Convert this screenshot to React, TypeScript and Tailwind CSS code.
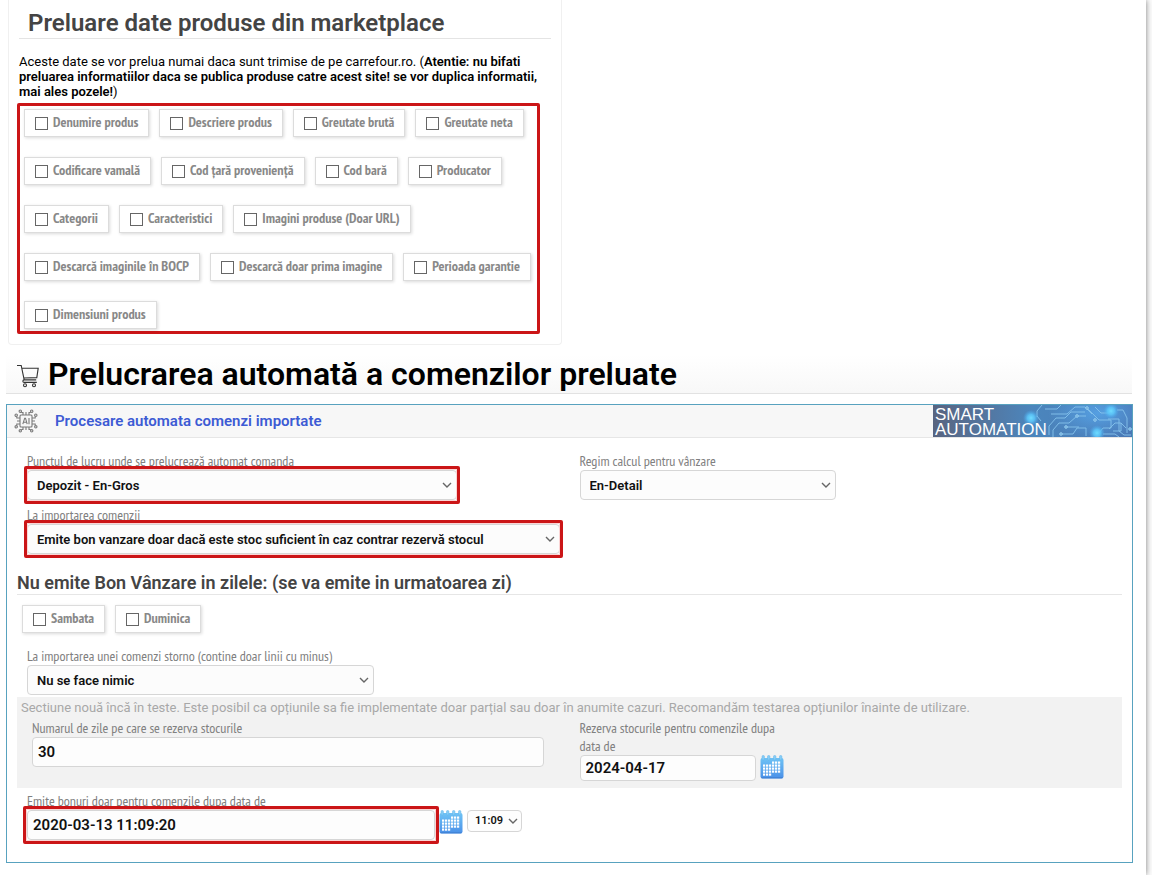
import { useState } from "react";
import type { ReactNode } from "react";

const narrow = "font-['PT_Sans_Narrow','Liberation_Sans_Narrow','Roboto_Condensed',sans-serif]";

const productRows = [
  ["Denumire produs", "Descriere produs", "Greutate brută", "Greutate neta"],
  ["Codificare vamală", "Cod țară proveniență", "Cod bară", "Producator"],
  ["Categorii", "Caracteristici", "Imagini produse (Doar URL)"],
  ["Descarcă imaginile în BOCP", "Descarcă doar prima imagine", "Perioada garantie"],
  ["Dimensiuni produs"],
];

function CheckChip({ label }: { label: string }) {
  return (
    <label
      className={`${narrow} flex h-7 items-center gap-[5px] border border-[#dcdcdc] bg-white px-2.5 text-[14px] leading-4 font-bold whitespace-nowrap text-[#888] shadow-[1px_1px_3px_rgba(0,0,0,0.15)]`}
    >
      <input type="checkbox" className="size-[13px] appearance-none border border-[#666] bg-white checked:bg-[#666]" />
      <span className="pb-0.5">{label}</span>
    </label>
  );
}

function Highlight({ className }: { className: string }) {
  return (
    <span
      aria-hidden="true"
      className={`pointer-events-none absolute rounded-xs border-3 border-[#cb1517] inset-shadow-[0_0_0_1px_#fbd5d5] ${className}`}
    />
  );
}

function Chevron({ className = "right-1" }: { className?: string }) {
  return (
    <svg
      viewBox="0 0 12 12"
      className={`pointer-events-none absolute top-1/2 size-3 -translate-y-1/2 ${className}`}
      fill="none"
      stroke="#666"
      strokeWidth="1.4"
    >
      <path d="M2 4l4 4 4-4" />
    </svg>
  );
}

function FieldLabel({ id, children }: { id: string; children: ReactNode }) {
  return (
    <label htmlFor={id} className={`${narrow} block text-[14px] leading-[18px] text-[#808080]`}>
      {children}
    </label>
  );
}

type SelectFieldProps = {
  id: string;
  label: string;
  value: string;
  width: string;
  highlight?: string;
};

function SelectField({ id, label, value, width, highlight }: SelectFieldProps) {
  return (
    <div>
      <FieldLabel id={id}>{label}</FieldLabel>
      <div className={`relative max-w-full ${width}`}>
        <select
          id={id}
          className="block h-[30px] w-full appearance-none rounded border border-[#d6d6d6] bg-[#fcfcfc] px-[9px] pt-0.5 text-[13px] font-semibold text-[#111]"
        >
          <option>{value}</option>
        </select>
        <Chevron />
        {highlight && <Highlight className={highlight} />}
      </div>
    </div>
  );
}

function CalendarButton({ label }: { label: string }) {
  const cells: [number, number][] = [];
  for (let r = 0; r < 5; r++) {
    for (let c = 0; c < 6; c++) {
      if ((r === 0 && c < 3) || (r === 4 && c > 2)) continue;
      cells.push([3 + c * 3, 6.5 + r * 3]);
    }
  }
  return (
    <button type="button" aria-label={label} className="size-6 shrink-0">
      <svg viewBox="0 0 24 24" className="size-6">
        <defs>
          <linearGradient id="cal" x1="0" y1="0" x2="0" y2="1">
            <stop offset="0" stopColor="#6fc3f5" />
            <stop offset="1" stopColor="#4a90e8" />
          </linearGradient>
        </defs>
        <rect x="0.5" y="3" width="23" height="20.5" rx="2" fill="url(#cal)" />
        <path d="M1.5 22.8h21" stroke="#3f7fd0" strokeWidth="1" />
        {[2, 7.5, 13.5, 19.5].map((x) => (
          <rect key={x} x={x} y="0.5" width="2.4" height="4.5" rx="1" fill="#85cdf6" stroke="#63b2ea" strokeWidth="0.5" />
        ))}
        {cells.map(([x, y]) => (
          <rect key={`${x}-${y}`} x={x} y={y} width="2.2" height="2.2" fill="#fff" />
        ))}
      </svg>
    </button>
  );
}

function CartIcon() {
  return (
    <svg viewBox="0 0 24 24" className="mt-1 size-6 shrink-0" fill="none" stroke="#333" strokeWidth="1.1">
      <path d="M1 1.5h4.2l3 14.4h12M5.8 4.2h16.4l-1.4 9.4-13 .4M8.2 15.9c-1.8.2-1.8 2.5 0 2.5h12.6" />
      <circle cx="9" cy="21.3" r="1.5" />
      <circle cx="18" cy="21.3" r="1.5" />
    </svg>
  );
}

function AiChipIcon() {
  return (
    <svg viewBox="0 0 24 24" className="size-6 shrink-0" fill="none" stroke="#7a7a7a" strokeWidth="1.1">
      <rect x="6" y="6" width="12" height="12" rx="1" />
      <path d="M8.8 15.2l1.9-6h.8l1.7 6M9.6 13.2h2.8M15 9v6.2" />
      <path d="M9 6V3.5H7.2M12 6V3M15 6V3.5h1.8M9 18v2.5H7.2M12 18v3M15 18v2.5h1.8" />
      <path d="M6 9H2.8V7.5M6 12H3M6 15H2.8v1.5M18 9h3.2V7.5M18 12h3M18 15h3.2v1.5" />
      <circle cx="6.3" cy="2.2" r="1.2" />
      <circle cx="17.7" cy="2.2" r="1.2" />
      <circle cx="6.3" cy="21.8" r="1.2" />
      <circle cx="17.7" cy="21.8" r="1.2" />
      <circle cx="2.2" cy="6.2" r="1.2" />
      <circle cx="2.2" cy="17.8" r="1.2" />
      <circle cx="21.8" cy="6.2" r="1.2" />
      <circle cx="21.8" cy="17.8" r="1.2" />
    </svg>
  );
}

function SmartBanner() {
  return (
    <div className="relative h-8 w-[199px] shrink-0 overflow-hidden bg-linear-to-r from-[#586480] via-[#4b86bd] to-[#4a78b5]">
      <svg viewBox="0 0 200 32" className="absolute inset-0 h-8 w-[200px]" fill="none">
        <defs>
          <radialGradient id="glow">
            <stop offset="0" stopColor="#6fdcff" />
            <stop offset="0.45" stopColor="#5cc4f8" stopOpacity="0.9" />
            <stop offset="1" stopColor="#4ba5ea" stopOpacity="0" />
          </radialGradient>
          <radialGradient id="wash">
            <stop offset="0" stopColor="#58a8ec" stopOpacity="0.8" />
            <stop offset="1" stopColor="#58a8ec" stopOpacity="0" />
          </radialGradient>
        </defs>
        <ellipse cx="165" cy="8" rx="50" ry="26" fill="url(#wash)" />
        <g stroke="#86c3ec" strokeWidth="0.9">
          <path d="M104 12V6l5-6M108 16l-4-5M116 30v-9l7-8h9l6-6h14M120 32v-7l6-7h10l8-7h9" />
          <path d="M112 4h12l4-4M128 29h12l4-6h9v8M132 22h14M118 9h16l8-7h10l7 7" />
          <path d="M154 3l12 12h12v8h-8l-5 6M162 2l6 6h8M175 14h11v12l5 4h7M184 5h6l4 8v15" />
          <path d="M176 24l6-6h6v8h-8M170 29h12l4 3M188 18l5 5" />
        </g>
        <g stroke="#a8daf6" strokeWidth="0.8" fill="#5a9fd6">
          <circle cx="133" cy="22" r="1.3" />
          <circle cx="144" cy="11" r="1.3" />
          <circle cx="162" cy="15" r="1.3" />
          <circle cx="154" cy="3" r="1.3" />
          <circle cx="128" cy="29" r="1.3" />
          <circle cx="197" cy="24" r="1.3" />
        </g>
        <circle cx="98" cy="13" r="8" fill="url(#glow)" />
        <circle cx="178" cy="6" r="8" fill="url(#glow)" />
        <circle cx="164" cy="28" r="8" fill="url(#glow)" />
      </svg>
      <p className="relative pt-0.5 pl-0.5 font-['Liberation_Sans',sans-serif] text-[17px] leading-[15px] text-white">
        SMART
        <br />
        AUTOMATION
      </p>
    </div>
  );
}

export default function App() {
  const [days, setDays] = useState("30");
  const [reserveDate, setReserveDate] = useState("2024-04-17");
  const [issueDate, setIssueDate] = useState("2020-03-13 11:09:20");

  const inputStyle = "block rounded border border-[#d6d6d6] bg-[#fdfdfd] px-[5px] text-[15px] font-semibold text-[#111]";

  return (
    <div className="min-h-screen bg-[#fcfcfc] pr-1.5 font-[Roboto,sans-serif] text-black">
      <main className="min-h-screen bg-white pr-3.5 pl-1.5 shadow-[0_0_6px_rgba(0,0,0,0.5)]">
        <section className="ml-0.5 max-w-[554px] rounded-b border border-t-0 border-[#f0f0f0] px-2 pb-2.5">
          <div className="px-0.5">
            <h2 className="border-b border-[#e4e4e4] px-[9px] pt-2 text-[24px] leading-[30px] font-semibold text-[#444]">
              Preluare date produse din marketplace
            </h2>
            <p className="pt-[15px] pb-1 text-[13px] leading-[15px]">
              Aceste date se vor prelua numai daca sunt trimise de pe carrefour.ro. (
              <b className="font-semibold">
                Atentie: nu bifati preluarea informatiilor daca se publica produse catre acest site! se vor duplica
                informatii, mai ales pozele!
              </b>
              )
            </p>
          </div>
          <div className="flex max-w-[523px] flex-col gap-5 rounded-xs border-3 border-[#cb1517] px-1 pt-[3px] pb-[2px]">
            {productRows.map((row) => (
              <div key={row[0]} className="flex flex-wrap gap-2.5">
                {row.map((label) => (
                  <CheckChip key={label} label={label} />
                ))}
              </div>
            ))}
          </div>
        </section>

        <header className="mt-2.5 flex h-[39px] items-center gap-2 border-b border-[#e2e2e2] bg-linear-to-b from-white to-[#f8f8f8] pl-2.5">
          <CartIcon />
          <h1 className="text-[32px] leading-9 font-semibold">Prelucrarea automată a comenzilor preluate</h1>
        </header>

        <section className="mt-2.5 -mr-px border border-[#58a2bf] pb-[22px]">
          <div className="flex items-center border-b border-[#e6e6e6] bg-[#f7f7f7] pl-[7px]">
            <AiChipIcon />
            <h3 className="flex-1 pl-[17px] text-[15px] leading-8 font-semibold text-[#3d5bd4]">
              Procesare automata comenzi importate
            </h3>
            <SmartBanner />
          </div>

          <div className="px-2.5 pt-3.5">
            <div className="grid grid-cols-2 gap-y-1.5">
              <div className="px-2.5">
                <SelectField
                  id="punct"
                  label="Punctul de lucru unde se prelucrează automat comanda"
                  value="Depozit - En-Gros"
                  width="w-[430px]"
                  highlight="-inset-x-[3px] -inset-y-1"
                />
              </div>
              <div className="px-2.5">
                <SelectField id="regim" label="Regim calcul pentru vânzare" value="En-Detail" width="w-64" />
              </div>
              <div className="px-2.5">
                <SelectField
                  id="import"
                  label="La importarea comenzii"
                  value="Emite bon vanzare doar dacă este stoc suficient în caz contrar rezervă stocul"
                  width="w-full"
                  highlight="-inset-x-[3px] -inset-y-1"
                />
              </div>
            </div>

            <h4 className="mt-[17px] border-b border-[#e6e6e6] text-[18px] leading-[23px] font-semibold text-[#444]">
              Nu emite Bon Vânzare in zilele: (se va emite in urmatoarea zi)
            </h4>
            <div className="flex gap-2.5 px-[5px] pt-2.5 pb-3.5">
              <CheckChip label="Sambata" />
              <CheckChip label="Duminica" />
            </div>

            <div className="px-2.5 pb-[2px]">
              <SelectField
                id="storno"
                label="La importarea unei comenzi storno (contine doar linii cu minus)"
                value="Nu se face nimic"
                width="w-[347px]"
              />
            </div>

            <div className="bg-[#f2f2f2] pb-[7px]">
              <p className="px-1 py-px text-[13px] leading-5 text-[#a8a8a8]">
                Sectiune nouă încă în teste. Este posibil ca opțiunile sa fie implementate doar parțial sau doar în
                anumite cazuri. Recomandăm testarea opțiunilor înainte de utilizare.
              </p>
              <div className="grid grid-cols-2">
                <div className="pr-[26px] pl-[15px]">
                  <FieldLabel id="zile">Numarul de zile pe care se rezerva stocurile</FieldLabel>
                  <input
                    id="zile"
                    className={`${inputStyle} h-[30px] w-full`}
                    value={days}
                    onChange={(e) => setDays(e.target.value)}
                  />
                </div>
                <div className="px-2.5">
                  <div className="max-w-[210px]">
                    <FieldLabel id="rezerva">Rezerva stocurile pentru comenzile dupa data de</FieldLabel>
                  </div>
                  <div className="flex gap-1">
                    <input
                      id="rezerva"
                      className={`${inputStyle} h-[26px] w-44`}
                      value={reserveDate}
                      onChange={(e) => setReserveDate(e.target.value)}
                    />
                    <CalendarButton label="Alege data rezervării" />
                  </div>
                </div>
              </div>
            </div>

            <div className="px-2.5 pt-1">
              <FieldLabel id="emite">Emite bonuri doar pentru comenzile dupa data de</FieldLabel>
              <div className="flex items-start gap-1">
                <div className="relative w-[408px]">
                  <input
                    id="emite"
                    className={`${inputStyle} h-[30px] w-full`}
                    value={issueDate}
                    onChange={(e) => setIssueDate(e.target.value)}
                  />
                  <Highlight className="-inset-x-1 -inset-y-1" />
                </div>
                <CalendarButton label="Alege data emiterii" />
                <div className="relative">
                  <select
                    aria-label="Ora"
                    className="block h-[22px] w-[55px] appearance-none rounded border border-[#d6d6d6] bg-[#fdfdfd] pl-[7px] text-[11px] font-semibold text-[#111]"
                  >
                    <option>11:09</option>
                  </select>
                  <Chevron className="right-[3px]" />
                </div>
              </div>
            </div>
          </div>
        </section>
      </main>
    </div>
  );
}
